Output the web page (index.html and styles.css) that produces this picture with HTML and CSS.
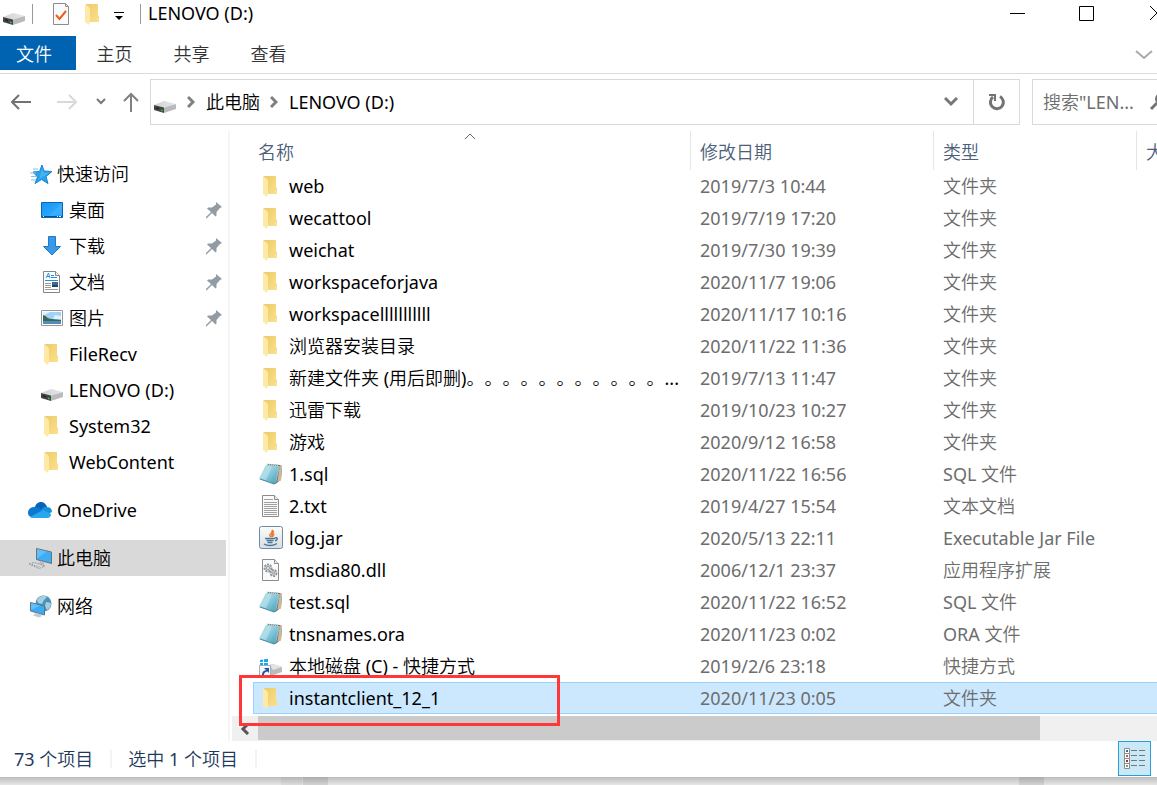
FILE: index.html
```html
<!DOCTYPE html>
<html lang="zh-CN">
<head>
  <meta charset="UTF-8">
  <meta name="viewport" content="width=device-width, initial-scale=1.0">
  <title>LENOVO (D:)</title>
  <link rel="stylesheet" href="styles.css">
</head>
<body>
  <svg class="sprite" aria-hidden="true">
    <defs>
      <linearGradient id="g-folder" x1="0" y1="0" x2="1" y2="1">
        <stop offset="0" stop-color="#eecb6b"/><stop offset="1" stop-color="#fbe08c"/>
      </linearGradient>
      <linearGradient id="g-drive" x1="0" y1="0" x2="1" y2="0">
        <stop offset="0" stop-color="#d2d3d6"/><stop offset="1" stop-color="#e6e6e9"/>
      </linearGradient>
      <linearGradient id="g-note" x1="0" y1="0" x2="1" y2="1">
        <stop offset="0" stop-color="#b9e1ea"/><stop offset=".45" stop-color="#8ecddd"/><stop offset="1" stop-color="#3d9cb5"/>
      </linearGradient>
      <linearGradient id="g-blue" x1="0" y1="0" x2="1" y2="1">
        <stop offset="0" stop-color="#1593f2"/><stop offset=".6" stop-color="#2aa6ff"/><stop offset="1" stop-color="#119bff"/>
      </linearGradient>
      <linearGradient id="g-jar" x1="0" y1="0" x2="0" y2="1">
        <stop offset="0" stop-color="#fbfcfd"/><stop offset="1" stop-color="#d9dde1"/>
      </linearGradient>
    </defs>
    <symbol id="i-folder" viewBox="0 0 24 24">
      <path d="M5 2h12v11l1 1v6H8z" fill="url(#g-folder)"/>
      <path d="M4 2l4 3 1 2v12l-1 4-4-3z" fill="#fee9a6"/>
    </symbol>
    <symbol id="i-drive" viewBox="0 0 24 24">
      <path d="M1 15l10-4 12 3-10 4z" fill="url(#g-drive)"/>
      <path d="M10 18l13-4v5l-12 4z" fill="#b9babd"/>
      <path d="M1 15l10 2.500v5.500l-10-3z" fill="#444645"/>
      <path d="M3 17l3 1v1.500l-3-1z" fill="#222"/>
      <path d="M8 19.500l1.500.500v1.500L8 21z" fill="#35d04a"/>
    </symbol>
    <symbol id="i-check" viewBox="0 0 24 24">
      <path d="M4.500 1.500h12l3 3v18h-15z" fill="#fafafa" stroke="#8c8c8c"/>
      <path d="M16.500 1.500v3h3" fill="none" stroke="#8c8c8c"/>
      <path d="M7 13l3.500 4L17 9" fill="none" stroke="#f25d12" stroke-width="2"/>
    </symbol>
    <symbol id="i-star" viewBox="0 0 24 24">
      <path d="M14 3l2 6 8 .500-6 5 2 7-6.500-4-6.500 4 2.500-6.500-4.500-5 6.500-.500z" fill="#2ba3ec" stroke="#1682d2"/>
      <path d="M5 7h5M2 11h6M3 14.500h6M3 18h5" stroke="#7fc4f2" fill="none"/>
      <path d="M14 6l1.500 4.500 5 .500-9 6z" fill="#58c0fa" opacity=".6"/>
    </symbol>
    <symbol id="i-desktop" viewBox="0 0 24 24">
      <path d="M1.500 4.500h21v15h-21z" fill="url(#g-blue)" stroke="#0868b8"/>
      <path d="M22 5v12L9 18z" fill="#4eb7ff" opacity=".55"/>
      <path d="M2 18.500h20" stroke="#0b4f8f"/>
      <path d="M3 18.500h1M17 18.500h1M19 18.500h2" stroke="#e8f6ff"/>
    </symbol>
    <symbol id="i-down" viewBox="0 0 24 24">
      <path d="M8.500 2.500h7v10h5L12 21l-8.500-8.500h5z" fill="#3998e8" stroke="#1f79cb"/>
    </symbol>
    <symbol id="i-doc" viewBox="0 0 24 24">
      <path d="M3.500 1.500h12l4 4v17h-16z" fill="#fff" stroke="#858585"/>
      <path d="M15.500 1.500v4h4" fill="#eee" stroke="#858585"/>
      <path d="M6 8l2.500-5 1.500 5M7 6.500h3" fill="none" stroke="#2d94dd"/>
      <path d="M11 5.500h3M11 7.500h6M5 10.500h13" stroke="#2490e0"/>
      <path d="M5 13.500h6M5 15.500h6M5 17.500h6M5 19.500h13" stroke="#9a9a9a"/>
      <path d="M12 12h6v5h-6z" fill="#386a9b"/><path d="M12 15h6v2h-6z" fill="#26465c"/>
    </symbol>
    <symbol id="i-picture" viewBox="0 0 24 24">
      <path d="M1.500 4.500h21v15h-21z" fill="#fff" stroke="#969696"/>
      <path d="M3 6h18v12H3z" fill="#9fd2f5"/>
      <path d="M3 6h7l-7 4zM15 9l6 1v3h-8z" fill="#e1f2fc"/>
      <path d="M3 9c4 1 4 4 9 4l9 1v1H3z" fill="#3d6658"/>
      <path d="M3 15h18v3H3z" fill="#4f8fb5"/>
    </symbol>
    <symbol id="i-pin" viewBox="0 0 18 18">
      <path d="M11 1l6 5-2 1-3.500 4v3.500l-1 1L7 12l-5 5-1 .500V16l5-5-4-3.500L3 6.500h4l4-3z" fill="#939ca4"/>
    </symbol>
    <symbol id="i-cloud" viewBox="0 0 24 24">
      <path d="M7 9c1-4 4-5 6-5 3 0 5 2 6 5l-7 5z" fill="#0464b8"/>
      <path d="M0 15c0-4 3-6 6-6 3-1 6 2 10 4L3 19c-2-1-3-2-3-4z" fill="#0d78d0"/>
      <path d="M13 12c2-3 4-4 6-3 3 0 5 2 5 5l-4 2z" fill="#1490df"/>
      <path d="M2 19l13-7 8 4c0 2-1 4-4 4H5c-1 0-2 0-3-1z" fill="#28a8ea"/>
    </symbol>
    <symbol id="i-pc" viewBox="0 0 24 24">
      <path d="M8.500 2.500l15 3.500v11.500l-15-4z" fill="#3eadf5" stroke="#6b7278"/>
      <path d="M9 3l10 2.500-10 7z" fill="#6cc6fb" opacity=".7"/>
      <path d="M12 15l4 1v3h-5z" fill="#b7bcc0"/>
      <path d="M1 18l5-1.500L17 20l-6 2.500z" fill="#d8dde0" stroke="#90989e" stroke-dasharray="2 1"/>
      <path d="M4 18.500l8 2.500" stroke="#8b969d" stroke-dasharray="1 1"/>
    </symbol>
    <symbol id="i-network" viewBox="0 0 24 24">
      <circle cx="15.500" cy="9.500" r="8" fill="#4b91b8"/>
      <path d="M9 6c3-5 8-5 10-3l-3 3-2 4-4-1zM18 8l5 1c0 4-2 6-4 7l-2-4z" fill="#a5cfdf"/>
      <path d="M2.500 8.500l14 3.500v9l-14-4z" fill="#3caaf4" stroke="#59758a"/>
      <path d="M3 9l9 2.500L3 16z" fill="#71c9fb" opacity=".7"/>
      <path d="M8 19l4 1 2 2-3 1.500-6-2z" fill="#c4c9cd"/>
    </symbol>
    <symbol id="i-note" viewBox="0 0 24 24">
      <path d="M8 2l13 1 2 1-1 14-6 4-3-1z" fill="#5f6558"/>
      <path d="M21 3l2 1-1 14-4 3z" fill="#c9b999"/>
      <path d="M8 3l13 1-4 17-3 1z" fill="#a9c5cb"/>
      <path d="M7 3l13 1-4 18L0 17z" fill="url(#g-note)"/>
      <path d="M8 4l5 .500L7 18l-6-1.500z" fill="#d3eff4" opacity=".4"/>
      <path d="M8 2.500l12 1" stroke="#b8c5c8" stroke-dasharray="1 1" stroke-width="2"/>
      <path d="M1 17l14 5 4-3" fill="none" stroke="#4d8998"/>
    </symbol>
    <symbol id="i-text" viewBox="0 0 24 24">
      <path d="M3.500 1.500h12l4 4v17h-16z" fill="#fafafa" stroke="#8c8c8c"/>
      <path d="M15.500 1.500v4h4" fill="#eee" stroke="#8c8c8c"/>
      <path d="M5 5.500h9M5 8.500h13M5 10.500h13M5 12.500h13M5 14.500h13M5 16.500h13M5 18.500h13M5 20.500h13" stroke="#a0a0a0"/>
    </symbol>
    <symbol id="i-jar" viewBox="0 0 24 24">
      <rect x=".5" y=".5" width="23" height="22" rx="2" fill="url(#g-jar)" stroke="#6c8ba5"/>
      <path d="M12 11c-4-3 3-3 1-7 4 3-2 4 0 7M14 11c-1-2 1-2 1-3" fill="none" stroke="#ec7b2b" stroke-width="1.500"/>
      <path d="M6 12.500h10M7.500 14.500h7M8.500 16.500h5M16 12c3-1 3 2 0 3M5 18c3 2 10 2 13-.500" fill="none" stroke="#4c7899" stroke-width="1.500"/>
    </symbol>
    <symbol id="i-dll" viewBox="0 0 24 24">
      <path d="M3.500 1.500h12l4 4v17h-16z" fill="#fafafa" stroke="#8c8c8c"/>
      <path d="M15.500 1.500v4h4" fill="#eee" stroke="#8c8c8c"/>
      <circle cx="9" cy="10" r="3.500" fill="#d6dade" stroke="#8e969c" stroke-width="2" stroke-dasharray="2 1"/>
      <circle cx="9" cy="10" r="1.500" fill="#fff" stroke="#8e969c"/>
      <circle cx="14.500" cy="15" r="3" fill="#d6dade" stroke="#8e969c" stroke-width="2" stroke-dasharray="2 1"/>
      <circle cx="14.500" cy="15" r="1" fill="#fff" stroke="#8e969c"/>
    </symbol>
    <symbol id="i-shortcut" viewBox="0 0 24 24">
      <path d="M1 6l3-.500v2.500H1zM5 5.300l4-.600V8H5zM1 9h3v2H1zM5 9h4v2H5z" fill="#16a9ee"/>
      <path d="M10 11l4-1 9 3v5l-11 4z" fill="#b9bbbe"/>
      <path d="M11 11l3-1 9 3-9 3z" fill="#e3e4e6"/>
      <path d="M.5 11.500h11v12H.5z" fill="#f4f7fb" stroke="#a5adb5"/>
      <path d="M3 22c0-4 1-5 4-6l-2-2h5v5l-1.500-1.500C5 18 5 20 5 22z" fill="#1c57a6"/>
    </symbol>
  </svg>

  <div class="window">
    <header class="titlebar">
      <svg class="icon"><use href="#i-drive"/></svg>
      <span class="sep"></span>
      <button class="quick" aria-label="属性"><svg class="icon"><use href="#i-check"/></svg></button>
      <button class="quick quick-folder" aria-label="新建文件夹"><svg class="icon"><use href="#i-folder"/></svg></button>
      <button class="quick quick-more" aria-label="自定义快速访问工具栏">
        <svg width="12" height="12" viewBox="0 0 12 12"><path d="M1 2.500h10" stroke="#000"/><path d="M2 6h8l-4 4z"/></svg>
      </button>
      <span class="sep"></span>
      <h1 class="title">LENOVO (D:)</h1>
      <div class="controls">
        <button aria-label="最小化"><svg width="16" height="16" viewBox="0 0 16 16"><path d="M0 8.500h15" stroke="#000"/></svg></button>
        <button aria-label="最大化"><svg width="16" height="16" viewBox="0 0 16 16"><path d="M.5 1.500h14v14H.5z" fill="none" stroke="#000"/></svg></button>
        <button aria-label="关闭"><svg width="16" height="16" viewBox="0 0 16 16"><path d="M2 1l14 14M16 1L2 15" stroke="#000"/></svg></button>
      </div>
    </header>

    <nav class="ribbon">
      <button class="tab tab-file">文件</button>
      <button class="tab">主页</button>
      <button class="tab">共享</button>
      <button class="tab">查看</button>
      <button class="expand" aria-label="展开功能区"><svg width="18" height="10" viewBox="0 0 18 10"><path d="M1 1l8 7 8-7" fill="none" stroke="#aaa" stroke-width="2"/></svg></button>
    </nav>

    <div class="navbar">
      <div class="arrows">
        <button class="back" aria-label="后退"><svg width="20" height="16" viewBox="0 0 20 16"><path d="M1 8h19M8 1L1 8l7 7" fill="none" stroke="#737373" stroke-width="2"/></svg></button>
        <button class="forward" aria-label="前进"><svg width="20" height="16" viewBox="0 0 20 16"><path d="M0 8h19M12 1l7 7-7 7" fill="none" stroke="#d9d9d9" stroke-width="2"/></svg></button>
        <button class="recent" aria-label="最近"><svg width="10" height="8" viewBox="0 0 10 8"><path d="M1 1l4 4 4-4" fill="none" stroke="#777" stroke-width="2"/></svg></button>
        <button class="up" aria-label="向上"><svg width="16" height="20" viewBox="0 0 16 20"><path d="M8 2v18M1 9l7-7 7 7" fill="none" stroke="#808080" stroke-width="2"/></svg></button>
      </div>
      <div class="address">
        <svg class="icon"><use href="#i-drive"/></svg>
        <svg class="crumb-arrow" viewBox="0 0 8 12"><path d="M1 1l5 5-5 5" fill="none" stroke="#808080" stroke-width="3"/></svg>
        <a href="#">此电脑</a>
        <svg class="crumb-arrow" viewBox="0 0 8 12"><path d="M1 1l5 5-5 5" fill="none" stroke="#808080" stroke-width="3"/></svg>
        <a href="#">LENOVO (D:)</a>
        <button class="history" aria-label="历史"><svg width="14" height="10" viewBox="0 0 14 10"><path d="M1 1l6 6 6-6" fill="none" stroke="#777" stroke-width="3"/></svg></button>
        <button class="refresh" aria-label="刷新"><svg width="18" height="18" viewBox="0 0 18 18"><path d="M12 3.500a6.500 6.500 0 1 1-7 .500" fill="none" stroke="#737373" stroke-width="3"/><path d="M1 1h7v7H6V3H1z" fill="#737373"/></svg></button>
      </div>
      <label class="search">
        <input type="text" placeholder='搜索"LEN...' aria-label="搜索">
        <svg width="20" height="20" viewBox="0 0 20 20"><circle cx="12" cy="7" r="5" fill="none" stroke="#737373" stroke-width="2"/><path d="M8 11l-6 6" stroke="#737373" stroke-width="3"/></svg>
      </label>
    </div>

    <div class="content">
      <aside class="sidebar">
        <a href="#" class="item"><svg class="icon"><use href="#i-star"/></svg>快速访问</a>
        <a href="#" class="item sub"><svg class="icon"><use href="#i-desktop"/></svg>桌面<svg class="pin"><use href="#i-pin"/></svg></a>
        <a href="#" class="item sub"><svg class="icon"><use href="#i-down"/></svg>下载<svg class="pin"><use href="#i-pin"/></svg></a>
        <a href="#" class="item sub"><svg class="icon"><use href="#i-doc"/></svg>文档<svg class="pin"><use href="#i-pin"/></svg></a>
        <a href="#" class="item sub"><svg class="icon"><use href="#i-picture"/></svg>图片<svg class="pin"><use href="#i-pin"/></svg></a>
        <a href="#" class="item sub"><svg class="icon"><use href="#i-folder"/></svg>FileRecv</a>
        <a href="#" class="item sub"><svg class="icon"><use href="#i-drive"/></svg>LENOVO (D:)</a>
        <a href="#" class="item sub"><svg class="icon"><use href="#i-folder"/></svg>System32</a>
        <a href="#" class="item sub"><svg class="icon"><use href="#i-folder"/></svg>WebContent</a>
        <a href="#" class="item root"><svg class="icon"><use href="#i-cloud"/></svg>OneDrive</a>
        <a href="#" class="item root current"><svg class="icon"><use href="#i-pc"/></svg>此电脑</a>
        <a href="#" class="item root"><svg class="icon"><use href="#i-network"/></svg>网络</a>
      </aside>

      <main class="files">
        <table>
          <thead>
            <tr>
              <th class="col-name">名称<svg class="sort" viewBox="0 0 12 7"><path d="M1 6l5-5 5 5" fill="none" stroke="#666"/></svg></th>
              <th class="col-date">修改日期</th>
              <th class="col-type">类型</th>
              <th class="col-size">大小</th>
            </tr>
          </thead>
          <tbody>
            <tr><td><svg class="icon"><use href="#i-folder"/></svg>web</td><td>2019/7/3 10:44</td><td>文件夹</td><td></td></tr>
            <tr><td><svg class="icon"><use href="#i-folder"/></svg>wecattool</td><td>2019/7/19 17:20</td><td>文件夹</td><td></td></tr>
            <tr><td><svg class="icon"><use href="#i-folder"/></svg>weichat</td><td>2019/7/30 19:39</td><td>文件夹</td><td></td></tr>
            <tr><td><svg class="icon"><use href="#i-folder"/></svg>workspaceforjava</td><td>2020/11/7 19:06</td><td>文件夹</td><td></td></tr>
            <tr><td><svg class="icon"><use href="#i-folder"/></svg>workspacelllllllllll</td><td>2020/11/17 10:16</td><td>文件夹</td><td></td></tr>
            <tr><td><svg class="icon"><use href="#i-folder"/></svg>浏览器安装目录</td><td>2020/11/22 11:36</td><td>文件夹</td><td></td></tr>
            <tr><td><svg class="icon"><use href="#i-folder"/></svg>新建文件夹 (用后即删)。。。。。。。。。。。...</td><td>2019/7/13 11:47</td><td>文件夹</td><td></td></tr>
            <tr><td><svg class="icon"><use href="#i-folder"/></svg>迅雷下载</td><td>2019/10/23 10:27</td><td>文件夹</td><td></td></tr>
            <tr><td><svg class="icon"><use href="#i-folder"/></svg>游戏</td><td>2020/9/12 16:58</td><td>文件夹</td><td></td></tr>
            <tr><td><svg class="icon"><use href="#i-note"/></svg>1.sql</td><td>2020/11/22 16:56</td><td>SQL 文件</td><td></td></tr>
            <tr><td><svg class="icon"><use href="#i-text"/></svg>2.txt</td><td>2019/4/27 15:54</td><td>文本文档</td><td></td></tr>
            <tr><td><svg class="icon"><use href="#i-jar"/></svg>log.jar</td><td>2020/5/13 22:11</td><td>Executable Jar File</td><td></td></tr>
            <tr><td><svg class="icon"><use href="#i-dll"/></svg>msdia80.dll</td><td>2006/12/1 23:37</td><td>应用程序扩展</td><td></td></tr>
            <tr><td><svg class="icon"><use href="#i-note"/></svg>test.sql</td><td>2020/11/22 16:52</td><td>SQL 文件</td><td></td></tr>
            <tr><td><svg class="icon"><use href="#i-note"/></svg>tnsnames.ora</td><td>2020/11/23 0:02</td><td>ORA 文件</td><td></td></tr>
            <tr><td><svg class="icon"><use href="#i-shortcut"/></svg>本地磁盘 (C) - 快捷方式</td><td>2019/2/6 23:18</td><td>快捷方式</td><td></td></tr>
            <tr class="selected"><td><svg class="icon"><use href="#i-folder"/></svg>instantclient_12_1<span class="mark"></span></td><td>2020/11/23 0:05</td><td>文件夹</td><td></td></tr>
          </tbody>
        </table>
        <div class="scrollbar">
          <button class="scroll-left" aria-label="向左滚动"><svg width="10" height="12" viewBox="0 0 10 12"><path d="M8 1L3 6l5 5" fill="none" stroke="#555" stroke-width="3"/></svg></button>
          <div class="track"><div class="thumb"></div></div>
          <button class="scroll-right" aria-label="向右滚动"><svg width="10" height="12" viewBox="0 0 10 12"><path d="M2 1l5 5-5 5" fill="none" stroke="#555" stroke-width="3"/></svg></button>
        </div>
      </main>
    </div>

    <footer class="status">
      <span>73 个项目</span>
      <span>选中 1 个项目</span>
      <button class="view" aria-label="详细信息">
        <svg width="22" height="22" viewBox="0 0 22 22">
          <path d="M.5 .5h5v5h-5zM.5 5.500h5v5h-5zM.5 10.500h5v5h-5zM.5 15.500h5v5h-5z" fill="#fff" stroke="#8c8c8c"/>
          <path d="M2 2h2v2H2z" fill="#2c6dad"/><path d="M2 7h2v2H2z" fill="#a4683a"/><path d="M2 12h2v2H2z" fill="#c8232c"/><path d="M2 17h2v2H2z" fill="#74a860"/>
          <path d="M7 2.500h6M15 2.500h6M7 7.500h6M15 7.500h6M7 12.500h6M15 12.500h6M7 17.500h6M15 17.500h6" stroke="#6b7a80"/>
        </svg>
      </button>
    </footer>
  </div>
  <div class="behind"></div>
</body>
</html>
```
FILE: styles.css
```css
* {
  box-sizing: border-box;
}

body {
  margin: 0;
  min-height: 100vh;
  overflow: hidden;
  display: flex;
  flex-direction: column;
  background: #e6e6e6;
  color: #000;
  font-family: "Noto Sans", "Noto Sans CJK SC DemiLight", "Noto Sans CJK SC", sans-serif;
  font-size: 18px;
  line-height: 24px;
}

button,
input {
  border: none;
  padding: 0;
  background: none;
  font: inherit;
  color: inherit;
}

button {
  display: flex;
  align-items: center;
  justify-content: center;
}

a {
  color: inherit;
  text-decoration: none;
}

svg {
  flex: none;
}

.sprite {
  position: absolute;
  width: 0;
  height: 0;
}

.icon {
  width: 24px;
  height: 24px;
}

/* the window runs past the right edge of the screen */
.window {
  width: calc(100% + 33px);
  background: #fff;
}

/* title bar */
.titlebar {
  display: flex;
  align-items: center;
  height: 28px;
  margin-bottom: 8px;
  padding-left: 2px;
}

.sep {
  width: 1px;
  height: 20px;
  margin-left: 6px;
  background: #999;
}

.quick {
  margin-left: 16px;
}

.quick-folder {
  margin-left: 8px;
}

.quick-more {
  margin: 4px 9px 0 8px;
}

.title {
  margin: 0 0 2px 7px;
  font-size: 18px;
  font-weight: 400;
}

.controls {
  display: flex;
  margin: 0 0 2px auto;
}

.controls button {
  width: 69px;
  height: 26px;
}

/* ribbon */
.ribbon {
  display: flex;
  height: 38px;
  border-bottom: 1px solid #dadbdc;
  color: #333;
}

.tab {
  width: 77px;
  height: 34px;
  padding-top: 2px;
}

.tab-file {
  width: 76px;
  padding-right: 8px;
  background: #0063b1;
  color: #fff;
}

.expand {
  margin: 0 37px 0 auto;
}

/* address bar */
.navbar {
  display: flex;
  gap: 12px;
  padding: 5px 10px 6px 0;
}

.arrows {
  display: flex;
  align-items: center;
  width: 138px;
  padding-left: 11px;
}

.forward {
  margin-left: 26px;
}

.recent {
  margin-left: 19px;
}

.up {
  margin-left: 17px;
}

.address {
  display: flex;
  align-items: center;
  flex: 1;
  height: 46px;
  padding-left: 2px;
  border: 1px solid #d9d9d9;
}

.crumb-arrow {
  width: 8px;
  height: 12px;
  margin: 0 11px 0 10px;
}

.history {
  width: 44px;
  height: 44px;
  margin-left: auto;
}

.refresh {
  width: 46px;
  height: 44px;
  border-left: 1px solid #d9d9d9;
}

.search {
  display: flex;
  align-items: center;
  width: 148px;
  height: 46px;
  padding-left: 10px;
  border: 1px solid #d9d9d9;
}

.search input {
  width: 106px;
}

.search input::placeholder {
  color: #6d6d6d;
  opacity: 1;
}

/* main area */
.content {
  display: flex;
}

.sidebar {
  flex: none;
  width: 230px;
  padding: 25px 0 0;
  border-right: 2px solid #f5f5f5;
}

.item {
  display: flex;
  align-items: center;
  gap: 5px;
  height: 36px;
  margin-right: 2px;
  padding-left: 28px;
}

.sub {
  padding-left: 40px;
}

.root {
  margin-top: 12px;
}

.current {
  background: #d9d9d9;
}

.pin {
  width: 18px;
  height: 18px;
  margin: 0 3px 0 auto;
}

.files {
  flex: 1;
  min-width: 0;
  padding-left: 2px;
}

table {
  width: calc(100% - 21px);
  margin-left: 21px;
  border-spacing: 0;
  table-layout: fixed;
}

th {
  position: relative;
  height: 39px;
  padding: 3px 0 0 9px;
  border-left: 1px solid #e5e5e5;
  color: #4c607a;
  font-weight: 400;
  text-align: left;
}

.col-name {
  padding-left: 5px;
  border: none;
}

.col-date {
  width: 243px;
}

.col-type {
  width: 203px;
}

.col-size {
  width: 54px;
}

.sort {
  position: absolute;
  top: 2px;
  left: 50%;
  width: 12px;
  height: 7px;
  margin-left: -8px;
}

td {
  height: 32px;
  padding: 0 0 0 10px;
  color: #6d6d6d;
  white-space: nowrap;
}

td:first-child {
  display: flex;
  align-items: center;
  gap: 6px;
  padding-left: 6px;
  color: #000;
  text-spacing-trim: space-all;
}

.selected td {
  background: #cce8ff;
  border: solid #99d1ff;
  border-width: 1px 0;
}

.selected td:first-child {
  position: relative;
  padding-left: 5px;
  border-left-width: 1px;
}

/* red frame round the selected folder */
.mark {
  position: absolute;
  z-index: 1;
  top: -8px;
  left: -15px;
  width: 321px;
  height: 51px;
  border: 3px solid #ff3737;
}

.scrollbar {
  display: flex;
  height: 25px;
  margin-top: 2px;
  background: #f0f0f0;
}

.scroll-left {
  width: 26px;
}

.track {
  flex: 1;
}

.thumb {
  width: 88%;
  height: 24px;
  background: #cbcbcb;
}

.scroll-right {
  width: 43px;
  padding-right: 5px;
}

/* status bar */
.status {
  display: flex;
  height: 36px;
  padding-left: 14px;
  color: #1e395b;
}

.status span {
  height: 18px;
  margin: 9px 16px 0 0;
  padding-right: 17px;
  border-right: 2px solid #f3f3f3;
  line-height: 18px;
}

.view {
  width: 33px;
  height: 35px;
  margin: 0 39px 0 auto;
  border: 1px solid #26a0da;
  background: #cbe8f6;
}

/* what shows of the window below, under this one's shadow */
.behind {
  flex: 1;
  background:
    linear-gradient(rgba(0, 0, 0, 0.18), rgba(0, 0, 0, 0)),
    linear-gradient(#dcdcdc, #dcdcdc) 281px 0 / 21px 100% no-repeat,
    linear-gradient(#d2d2d2, #d2d2d2) 303px 0 / 25px 100% no-repeat,
    linear-gradient(#d2d2d2, #d2d2d2) 90% 0 / 25px 100% no-repeat,
    #e6e6e6;
}
```
